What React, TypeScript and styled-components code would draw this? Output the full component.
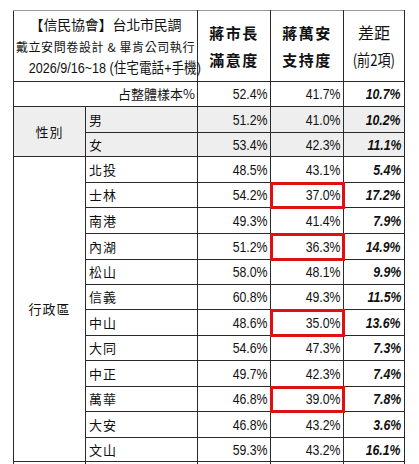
import React from 'react';
import styled, { createGlobalStyle } from 'styled-components';

const GlobalStyle = createGlobalStyle`
  html, body {
    margin: 0;
    padding: 0;
    background: #fff;
  }
`;

const Page = styled.div`
  padding: 10px 0 0 13px;
  width: 419px;
  height: 464px;
  overflow: hidden;
  box-sizing: border-box;
`;

const Table = styled.table`
  border-collapse: collapse;
  table-layout: fixed;
  width: 391px;
  color: #111;
  font-family: "Liberation Sans", "Noto Sans CJK TC", sans-serif;
`;

const HeadRow = styled.tr`
  height: 71px;
`;

const Row = styled.tr<{ $shade?: boolean; $h?: number }>`
  height: ${(p) => p.$h || 25}px;
  background: ${(p) => (p.$shade ? '#eeeeee' : '#fff')};
`;

const Cell = styled.td`
  border: 1px solid #2a2a2a;
  padding: 0;
  line-height: 18px;
  white-space: nowrap;
  overflow: visible;
`;

/* condensed look of the narrow digits */
const Squeeze = styled.span<{ $origin?: string }>`
  display: inline-block;
  transform: scaleX(0.82);
  transform-origin: ${(p) => p.$origin || 'right'} center;
`;

const TitleCell = styled(Cell)`
  border-top-color: #999;
  text-align: center;
  vertical-align: middle;
  font-family: "Noto Sans CJK TC", sans-serif;
  line-height: 21.5px;
  padding-top: 1px;
`;

const TitleMain = styled.div`
  font-size: 14px;
  font-weight: 400;
  letter-spacing: -0.2px;
`;

const TitleSub = styled.div`
  font-size: 12px;
  letter-spacing: 0.6px;
`;

const TitleDate = styled.div`
  font-family: "Liberation Sans", "Noto Sans CJK TC", sans-serif;
  font-size: 15px;
  transform: scaleX(0.84);
`;

const ColHead = styled(Cell)`
  border-top-color: #999;
  text-align: center;
  font-family: "Noto Sans CJK TC", sans-serif;
  font-size: 15px;
  font-weight: 700;
  letter-spacing: 1.5px;
  line-height: 27px;
`;

const GapHead = styled(Cell)`
  border-top-color: #999;
  text-align: center;
  font-family: "Noto Sans CJK TC", sans-serif;
  font-size: 16px;
  line-height: 27px;
`;

const SampleLabel = styled(Cell)`
  text-align: right;
  padding-right: 2px;
  font-family: "Noto Sans CJK TC", sans-serif;
  font-size: 13px;
`;

const GroupCell = styled(Cell)`
  text-align: center;
  vertical-align: middle;
  font-family: "Noto Sans CJK TC", sans-serif;
  font-size: 13px;
  letter-spacing: 1px;
`;

const Label = styled(Cell)`
  padding-left: 3px;
  font-family: "Noto Sans CJK TC", sans-serif;
  font-size: 13px;
  letter-spacing: 1px;
`;

const Num = styled(Cell)<{ $mark?: boolean }>`
  text-align: right;
  padding-right: 2px;
  font-size: 15px;
  outline: ${(p) => (p.$mark ? '3px solid #e01010' : 'none')};
  outline-offset: -2px;
`;

const Gap = styled(Cell)`
  text-align: right;
  padding-right: 3px;
  font-size: 15px;
  font-weight: 700;
  font-style: italic;
`;

type Item = { name: string; a: string; b: string; d: string; h: number; mark?: boolean };

const gender: Item[] = [
  { name: '男', a: '51.2%', b: '41.0%', d: '10.2%', h: 26 },
  { name: '女', a: '53.4%', b: '42.3%', d: '11.1%', h: 24 },
];

const districts: Item[] = [
  { name: '北投', a: '48.5%', b: '43.1%', d: '5.4%', h: 26 },
  { name: '士林', a: '54.2%', b: '37.0%', d: '17.2%', h: 25, mark: true },
  { name: '南港', a: '49.3%', b: '41.4%', d: '7.9%', h: 26 },
  { name: '內湖', a: '51.2%', b: '36.3%', d: '14.9%', h: 26, mark: true },
  { name: '松山', a: '58.0%', b: '48.1%', d: '9.9%', h: 25 },
  { name: '信義', a: '60.8%', b: '49.3%', d: '11.5%', h: 25 },
  { name: '中山', a: '48.6%', b: '35.0%', d: '13.6%', h: 26, mark: true },
  { name: '大同', a: '54.6%', b: '47.3%', d: '7.3%', h: 25 },
  { name: '中正', a: '49.7%', b: '42.3%', d: '7.4%', h: 26 },
  { name: '萬華', a: '46.8%', b: '39.0%', d: '7.8%', h: 25, mark: true },
  { name: '大安', a: '46.8%', b: '43.2%', d: '3.6%', h: 26 },
  { name: '文山', a: '59.3%', b: '43.2%', d: '16.1%', h: 24 },
];

const DataRow = ({ item, lead, shade }: { item: Item; lead?: React.ReactNode; shade?: boolean }) => (
  <Row $shade={shade} $h={item.h}>
    {lead}
    <Label>{item.name}</Label>
    <Num>
      <Squeeze>{item.a}</Squeeze>
    </Num>
    <Num $mark={item.mark}>
      <Squeeze>{item.b}</Squeeze>
    </Num>
    <Gap>
      <Squeeze>{item.d}</Squeeze>
    </Gap>
  </Row>
);

const App = () => {
  return (
    <Page>
      <GlobalStyle />
      <Table>
        <colgroup>
          <col style={{ width: 72 }} />
          <col style={{ width: 112 }} />
          <col style={{ width: 73 }} />
          <col style={{ width: 73 }} />
          <col style={{ width: 61 }} />
        </colgroup>
        <tbody>
          <HeadRow>
            <TitleCell colSpan={2}>
              <TitleMain>【信民協會】台北市民調</TitleMain>
              <TitleSub>戴立安問卷設計 &amp; 畢肯公司執行</TitleSub>
              <TitleDate>2026/9/16~18 (住宅電話+手機)</TitleDate>
            </TitleCell>
            <ColHead>
              蔣市長
              <br />
              滿意度
            </ColHead>
            <ColHead>
              蔣萬安
              <br />
              支持度
            </ColHead>
            <GapHead>
              差距
              <br />
              <Squeeze $origin="center">(前2項)</Squeeze>
            </GapHead>
          </HeadRow>
          <Row $h={25}>
            <SampleLabel colSpan={2}>占整體樣本%</SampleLabel>
            <Num>
              <Squeeze>52.4%</Squeeze>
            </Num>
            <Num>
              <Squeeze>41.7%</Squeeze>
            </Num>
            <Gap>
              <Squeeze>10.7%</Squeeze>
            </Gap>
          </Row>
          {gender.map((g, i) => (
            <DataRow
              key={g.name}
              item={g}
              shade
              lead={i === 0 ? <GroupCell rowSpan={gender.length}>性別</GroupCell> : null}
            />
          ))}
          {districts.map((r, i) => (
            <DataRow
              key={r.name}
              item={r}
              lead={i === 0 ? <GroupCell rowSpan={districts.length}>行政區</GroupCell> : null}
            />
          ))}
          <Row $h={25}>
            <GroupCell />
            <Label />
            <Num />
            <Num />
            <Gap />
          </Row>
        </tbody>
      </Table>
    </Page>
  );
};

export default App;
